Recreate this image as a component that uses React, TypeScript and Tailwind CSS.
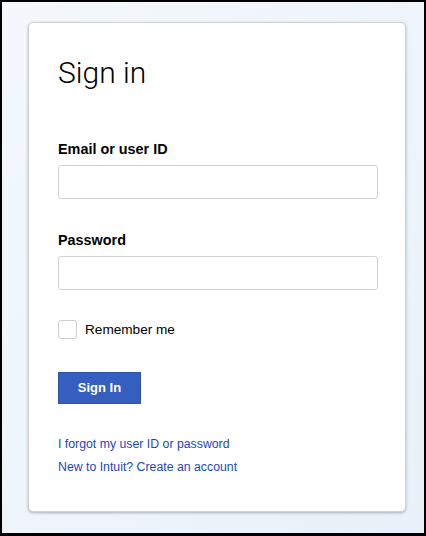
import React from "react";

export default function App() {
  return (
    <div className="w-[426px] h-[536px] bg-black pt-[2px] pl-[2px] pr-[2px] pb-[3px]" style={{ fontFamily: '"Liberation Sans", Arial, sans-serif' }}>
      <div className="w-full h-full bg-gradient-to-br from-[#f4f8fc] to-[#e8f1f9] pl-[26px] pt-[20px]">
        <div className="w-[378px] h-[490px] bg-white border border-[#cfd3d8] rounded-[5px] shadow-[0_1px_3px_rgba(0,0,0,0.28)] pl-[29px] pr-[28px] pt-[32px]">
          <h1 className="text-[30px] leading-[36px] text-black font-light" style={{ fontFamily: 'Roboto, "Liberation Sans", sans-serif' }}>Sign in</h1>
          <label className="block mt-[49px] text-[14.4px] leading-[18px] font-bold text-black">Email or user ID</label>
          <div className="mt-[7px] h-[34px] w-[320px] border border-[#d2d2d2] rounded-[3px] bg-white"></div>
          <label className="block mt-[32px] text-[14.4px] leading-[18px] font-bold text-black">Password</label>
          <div className="mt-[7px] h-[34px] w-[320px] border border-[#d2d2d2] rounded-[3px] bg-white"></div>
          <div className="mt-[30px] flex items-center h-[19px]">
            <div className="w-[19px] h-[19px] border border-[#cfcfcf] rounded-[3px] bg-white"></div>
            <span className="ml-[8px] text-[13.6px] leading-[18px] text-black">Remember me</span>
          </div>
          <button className="mt-[33px] block w-[83px] h-[32px] bg-[#365ebf] border border-[#2f54b0] text-white text-[13px] font-bold">Sign In</button>
          <div className="mt-[32px] flex flex-col gap-[7px] text-[12.3px] leading-[16px] text-[#1c47bf]">
            <a>I forgot my user ID or password</a>
            <a>New to Intuit? Create an account</a>
          </div>
        </div>
      </div>
    </div>
  );
}
